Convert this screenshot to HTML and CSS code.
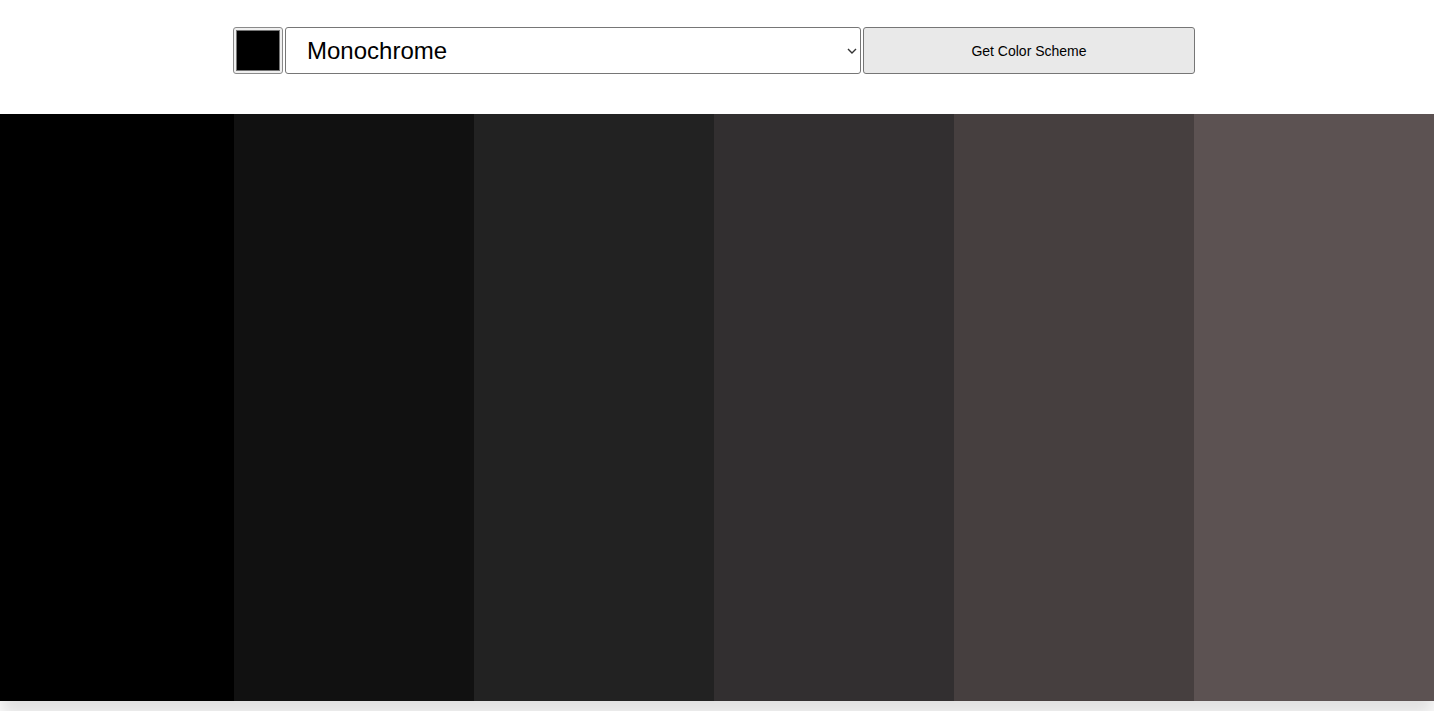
FILE: index.html
```html
<!DOCTYPE html>
<html lang="en">
<head>
    <meta charset="UTF-8">
    <meta name="viewport" content="width=device-width, initial-scale=1.0">
    <title>Color Scheme Generator</title>
    <link rel="stylesheet" href="styles.css">
</head>
<body>
    <header class="controls">
        <input type="color" class="seed-color" value="#000000">
        <div class="select-wrap">
            <select class="scheme-mode">
                <option selected>Monochrome</option>
                <option>Monochrome-dark</option>
                <option>Monochrome-light</option>
                <option>Analogic</option>
                <option>Complement</option>
                <option>Analogic-complement</option>
                <option>Triad</option>
            </select>
            <svg class="chevron" width="10" height="6" viewBox="0 0 10 6">
                <path d="M1 1 L5 5 L9 1" fill="none" stroke="#333" stroke-width="1.4"/>
            </svg>
        </div>
        <button class="get-scheme">Get Color Scheme</button>
    </header>

    <main class="palette">
        <div class="swatch" style="background: #000000;"></div>
        <div class="swatch" style="background: #111111;"></div>
        <div class="swatch" style="background: #222222;"></div>
        <div class="swatch" style="background: #322f30;"></div>
        <div class="swatch" style="background: #463f3f;"></div>
        <div class="swatch" style="background: #5c5252;"></div>
    </main>
</body>
</html>
```

FILE: styles.css
```css
* {
    box-sizing: border-box;
}
body {
    margin: 0;
    font-family: "Liberation Sans", Arial, sans-serif;
    background: #fff;
}
.controls {
    display: flex;
    justify-content: center;
    gap: 2px;
    padding: 27px 0 40px;
    margin-left: -6px;
}
.seed-color {
    width: 50px;
    height: 47px;
    padding: 2px;
    margin: 0;
    border: 1px solid #8a8a8a;
    border-radius: 3px;
    background: #efefef;
    cursor: pointer;
}
.seed-color::-webkit-color-swatch-wrapper {
    padding: 0;
}
.seed-color::-webkit-color-swatch {
    border: 1px solid #777;
    border-radius: 0;
}
.select-wrap {
    position: relative;
}
.scheme-mode {
    appearance: none;
    -webkit-appearance: none;
    width: 576px;
    height: 47px;
    margin: 0;
    padding: 0 30px 0 21px;
    font-family: inherit;
    font-size: 24px;
    color: #000;
    background: #fff;
    border: 1px solid #767676;
    border-radius: 3px;
}
.chevron {
    position: absolute;
    right: 4px;
    top: 21px;
    pointer-events: none;
}
.get-scheme {
    width: 332px;
    height: 47px;
    margin: 0;
    font-family: inherit;
    font-size: 14px;
    color: #000;
    background: #e9e9e9;
    border: 1px solid #767676;
    border-radius: 3px;
    cursor: pointer;
}
.palette {
    display: grid;
    grid-template-columns: 234px repeat(5, 1fr);
    height: 587px;
    margin-bottom: 30px;
    box-shadow: 0 14px 16px rgba(0, 0, 0, 0.12);
}
.swatch {
    height: 100%;
}
```
